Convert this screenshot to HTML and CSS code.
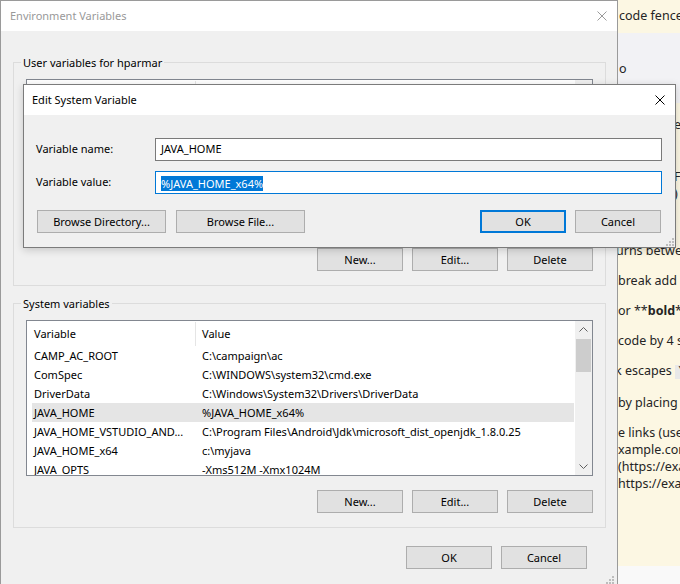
FILE: index.html
```html
<!DOCTYPE html>
<html>
<head>
<meta charset="utf-8">
<link rel="stylesheet" href="styles.css">
</head>
<body>
<div class="desktop">
  <div class="env">
    <div class="titlebar inactive">
      <span class="title">Environment Variables</span>
      <svg class="close" width="10" height="10" viewBox="0 0 10 10"><path d="M0.5 0.5 L9.5 9.5 M9.5 0.5 L0.5 9.5" stroke="#9a9a9a" stroke-width="1" fill="none"/></svg>
    </div>
    <div class="env-body">
      <fieldset class="group user">
        <legend>User variables for hparmar</legend>
        <div class="group-inner">
          <div class="listbox">
            <div class="list-content">
              <div class="list-head"><div class="hcell c1"></div><div class="hcell c2"></div></div>
            </div>
            <div class="scrollbar">
              <div class="sb-btn"><svg width="17" height="17" viewBox="0 0 17 17"><path d="M4.5 10.5 L8.5 6.5 L12.5 10.5" stroke="#606060" fill="none"/></svg></div>
              <div class="sb-track"></div>
              <div class="sb-btn"><svg width="17" height="17" viewBox="0 0 17 17"><path d="M4.5 6.5 L8.5 10.5 L12.5 6.5" stroke="#606060" fill="none"/></svg></div>
            </div>
          </div>
          <div class="btnrow">
            <button class="btn">New...</button>
            <button class="btn">Edit...</button>
            <button class="btn">Delete</button>
          </div>
        </div>
      </fieldset>

      <fieldset class="group sys">
        <legend>System variables</legend>
        <div class="group-inner">
          <div class="listbox">
            <div class="list-content">
              <div class="list-head"><div class="hcell c1">Variable</div><div class="hcell c2">Value</div></div>
              <div class="row"><div class="cell c1">CAMP_AC_ROOT</div><div class="cell c2">C:\campaign\ac</div></div>
              <div class="row"><div class="cell c1">ComSpec</div><div class="cell c2">C:\WINDOWS\system32\cmd.exe</div></div>
              <div class="row"><div class="cell c1">DriverData</div><div class="cell c2">C:\Windows\System32\Drivers\DriverData</div></div>
              <div class="row selected"><div class="cell c1">JAVA_HOME</div><div class="cell c2">%JAVA_HOME_x64%</div></div>
              <div class="row"><div class="cell c1">JAVA_HOME_VSTUDIO_AND...</div><div class="cell c2">C:\Program Files\Android\Jdk\microsoft_dist_openjdk_1.8.0.25</div></div>
              <div class="row"><div class="cell c1">JAVA_HOME_x64</div><div class="cell c2">c:\myjava</div></div>
              <div class="row"><div class="cell c1">JAVA_OPTS</div><div class="cell c2">-Xms512M -Xmx1024M</div></div>
            </div>
            <div class="scrollbar">
              <div class="sb-btn"><svg width="17" height="17" viewBox="0 0 17 17"><path d="M4.5 10.5 L8.5 6.5 L12.5 10.5" stroke="#606060" fill="none"/></svg></div>
              <div class="sb-track"><div class="sb-thumb"></div></div>
              <div class="sb-btn"><svg width="17" height="17" viewBox="0 0 17 17"><path d="M4.5 6.5 L8.5 10.5 L12.5 6.5" stroke="#606060" fill="none"/></svg></div>
            </div>
          </div>
          <div class="btnrow">
            <button class="btn">New...</button>
            <button class="btn">Edit...</button>
            <button class="btn">Delete</button>
          </div>
        </div>
      </fieldset>

      <div class="footer">
        <button class="btn">OK</button>
        <button class="btn">Cancel</button>
      </div>
      <div class="grip-row">
        <svg class="grip" width="9" height="9" viewBox="0 0 9 9"><g fill="#bdbdbd"><rect x="7" y="1" width="2" height="2"/><rect x="4" y="4" width="2" height="2"/><rect x="7" y="4" width="2" height="2"/><rect x="1" y="7" width="2" height="2"/><rect x="4" y="7" width="2" height="2"/><rect x="7" y="7" width="2" height="2"/></g></svg>
      </div>
    </div>
  </div>

  <div class="panel">
    <div class="pblock top"><p>code fence</p></div>
    <div class="pblock mid"><p>o</p></div>
    <div class="pblock help">
      <p class="tail l-er">er</p>
      <p class="tail l-f">F<br>)</p>
      <p class="l-urns">urns betwe</p>
      <p class="l-n">break add</p>
      <p class="l-n">or **<b>bold</b>**</p>
      <p class="l-n">code by 4 spaces</p>
      <p class="l-n l-k">k escapes <code>\</code></p>
      <p class="l-n">by placing :</p>
      <p class="l-n">e links (use<br>xample.com<br>(https://exa<br>https://exa</p>
    </div>
    <div class="pblock foot"></div>
  </div>

  <div class="dialog">
    <div class="titlebar">
      <span class="title">Edit System Variable</span>
      <svg class="close" width="10" height="10" viewBox="0 0 10 10"><path d="M0.5 0.5 L9.5 9.5 M9.5 0.5 L0.5 9.5" stroke="#000" stroke-width="1" fill="none"/></svg>
    </div>
    <div class="dialog-body">
      <div class="field">
        <label>Variable name:</label>
        <div class="input">JAVA_HOME</div>
      </div>
      <div class="field">
        <label>Variable value:</label>
        <div class="input focused"><span class="sel">%JAVA_HOME_x64%</span></div>
      </div>
      <div class="dlg-buttons">
        <div class="btn-group">
          <button class="btn wide">Browse Directory...</button>
          <button class="btn wide">Browse File...</button>
        </div>
        <div class="btn-group">
          <button class="btn default">OK</button>
          <button class="btn">Cancel</button>
        </div>
      </div>
    </div>
    <svg class="grip dlg-grip" width="9" height="9" viewBox="0 0 9 9"><g fill="#bdbdbd"><rect x="7" y="1" width="2" height="2"/><rect x="4" y="4" width="2" height="2"/><rect x="7" y="4" width="2" height="2"/><rect x="1" y="7" width="2" height="2"/><rect x="4" y="7" width="2" height="2"/><rect x="7" y="7" width="2" height="2"/></g></svg>
  </div>
</div>
</body>
</html>
```

FILE: styles.css
```css
* { box-sizing: border-box; }
html, body { margin: 0; padding: 0; }
body {
  width: 680px;
  height: 584px;
  overflow: hidden;
  font-family: "Noto Sans", "DejaVu Sans", sans-serif;
  font-size: 11px;
  color: #000;
  background: #fff;
}
.desktop {
  position: relative;
  display: flex;
  width: 680px;
  height: 584px;
}

/* ---------- main window ---------- */
.env {
  flex: none;
  width: 618px;
  height: 584px;
  border: 1px solid #9a9a9a;
  border-bottom: none;
  background: #f0f0f0;
  display: flex;
  flex-direction: column;
}
.titlebar {
  flex: none;
  height: 30px;
  background: #fff;
  display: flex;
  align-items: center;
  justify-content: space-between;
  padding: 0 10px 0 9px;
}
.titlebar .title { line-height: 16px; font-size: 11px; }
.titlebar.inactive .title { color: #999; }
.env-body {
  flex: 1;
  display: flex;
  flex-direction: column;
  padding-top: 24px;
}
.group {
  margin: 0 11px 0 12px;
  padding: 0;
  border: 1px solid #dcdcdc;
  min-width: 0;
}
.group.sys { margin-top: 10px; }
.group legend {
  margin-left: 7px;
  padding: 0 2px;
  line-height: 15px;
  font-size: 11px;
}
.group-inner {
  padding: 9px 12px 14px;
}
.listbox {
  height: 156px;
  border: 1px solid #828790;
  background: #fff;
  display: flex;
  overflow: hidden;
}
.list-content {
  flex: 1;
  min-width: 0;
  overflow: hidden;
}
.list-head {
  display: flex;
  height: 25px;
}
.hcell.c1 {
  width: 169px;
  padding-left: 7px;
  border-right: 1px solid #e5e5e5;
  height: 24px;
  margin-top: 1px;
  line-height: 23px;
}
.hcell.c2 { padding-left: 6px; line-height: 23px; margin-top: 1px; }
.row {
  display: flex;
  height: 19px;
  line-height: 19px;
  margin: 0 1px 0 5px;
  white-space: nowrap;
}
.row.selected { background: #e5e5e5; }
.cell.c1 { width: 170px; padding-left: 2px; overflow: hidden; }
.cell.c2 { flex: 1; overflow: hidden; }
.scrollbar {
  flex: none;
  width: 17px;
  background: #f0f0f0;
  display: flex;
  flex-direction: column;
}
.sb-btn { height: 17px; flex: none; }
.sb-btn svg { display: block; }
.sb-track { flex: 1; padding: 1px 1px 0; }
.sb-thumb { height: 33px; background: #cdcdcd; }
.btnrow {
  display: flex;
  justify-content: flex-end;
  gap: 9px;
  margin-top: 14px;
}
.group.user .btnrow { margin-top: 13px; }
.btn {
  width: 86px;
  height: 23px;
  margin: 0;
  padding: 0;
  border: 1px solid #adadad;
  background: #e1e1e1;
  font: inherit;
  color: #000;
  line-height: 21px;
  text-align: center;
}
.btn.default { border: 2px solid #0078d7; line-height: 19px; }
.btn.wide { width: 129px; }
.footer {
  display: flex;
  justify-content: flex-end;
  gap: 9px;
  margin-top: 18px;
  padding-right: 30px;
}
.grip-row {
  display: flex;
  justify-content: flex-end;
  margin-top: 6px;
  padding-right: 3px;
}
.grip { display: block; }

/* ---------- background panel ---------- */
.panel {
  flex: 1;
  min-width: 0;
  display: flex;
  flex-direction: column;
  overflow: hidden;
  font-size: 12.5px;
  color: #242424;
  white-space: nowrap;
}
.panel p { margin: 0; line-height: 17px; }
.pblock { flex: none; }
.pblock.top { height: 33px; background: #fcf7e3; padding: 7px 0 0 1px; }
.pblock.mid { height: 70px; background: #f2f2f5; padding: 27px 0 0 1px; }
.pblock.help { height: 463px; background: #fcf7e3; padding: 13px 0 0 0; }
.pblock.foot { flex: 1; background: #f9f9f9; }
.panel .tail { padding-left: 56px; }
.panel .l-f { margin-top: 35px; }
.panel .l-urns { margin-top: 40px; margin-left: -2px; }
.panel .l-n { margin-top: 13px; }
.panel .l-k { margin-left: -3px; }
.panel code {
  font-family: "Liberation Mono", monospace;
  background: #e8e8e8;
  padding: 0 3px;
}

/* ---------- edit dialog ---------- */
.dialog {
  position: absolute;
  left: 23px;
  top: 84px;
  width: 653px;
  height: 164px;
  border: 1px solid #7b7b7b;
  background: #f0f0f0;
  box-shadow: 0 2px 8px rgba(0,0,0,0.18);
}
.dialog .titlebar { padding: 0 10px 0 8px; }
.dialog-body {
  padding: 23px 13px 0 12px;
}
.field {
  display: flex;
  align-items: center;
  height: 23px;
  margin-bottom: 10px;
}
.field label { width: 119px; flex: none; line-height: 20px; margin-bottom: 2px; }
.input {
  flex: 1;
  height: 23px;
  border: 1px solid #7a7a7a;
  background: #fff;
  padding-left: 5px;
  line-height: 20px;
  white-space: nowrap;
}
.input.focused { border-color: #0078d7; }
.sel {
  background: #0078d7;
  color: #fff;
  display: inline-block;
  line-height: 15px;
  vertical-align: middle;
}
.dlg-buttons {
  display: flex;
  justify-content: space-between;
  margin-top: 16px;
  padding: 0 1px 0 1px;
}
.btn-group { display: flex; gap: 10px; }
.btn-group + .btn-group { gap: 9px; }
.dlg-grip {
  position: absolute;
  right: 1px;
  bottom: 1px;
}
```
